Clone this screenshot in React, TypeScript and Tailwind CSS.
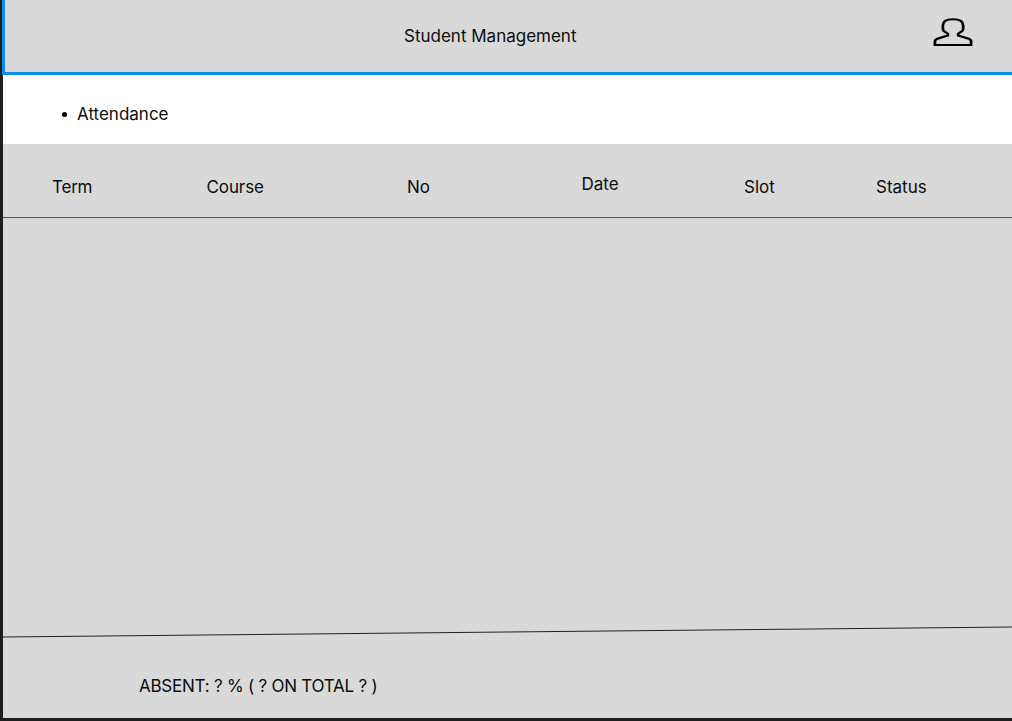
import React from "react";

const columns = [
  { label: "Term", cls: "w-[154.5px] -tracking-[0.2px]" },
  { label: "Course", cls: "w-[200.5px] -tracking-[0.1px]" },
  { label: "No", cls: "w-[174.5px]" },
  { label: "Date", cls: "w-[162.5px] -mt-[3px]" },
  { label: "Slot", cls: "w-[132px]" },
  { label: "Status", cls: "" },
];

export default function App() {
  return (
    <div className="flex h-[721px] w-[1012px] flex-col overflow-hidden bg-[#1e1e1e] pb-[3px] pl-[3px] font-['Inter',sans-serif] text-[17px] leading-5 text-[#0d0d0d]">
      <header className="-ml-[1px] flex h-[75px] shrink-0 border-b-[3px] border-l-[3px] border-[#0d8ce9] bg-[#d9d9d9] pl-[399px] pt-[26px]">
        <h1 className="w-[529px] whitespace-nowrap">Student Management</h1>
        <svg className="-mt-[9px] h-[30px] w-[40px] shrink-0" viewBox="0 0 30.77 30" preserveAspectRatio="none" fill="none" stroke="black" strokeWidth="2.1">
          <path d="M11.4 18.5 V16.8 L8.3 14 Q7.6 13.2 7.6 11.5 V8.5 C7.6 4.2 10.5 2.2 15.4 2.2 C20.3 2.2 23.2 4.2 23.2 8.5 V11.5 Q23.2 13.2 22.5 14 L19.4 16.8 V18.5 L27.5 21.7 Q29.3 22.5 29.3 24.3 V28 H1.5 V24.3 Q1.5 22.5 3.3 21.7 Z" />
        </svg>
      </header>
      <nav className="h-[69px] shrink-0 bg-white pl-[59px] pt-[29px]">
        <ul>
          <li className="flex items-center before:mt-px before:mr-[10px] before:size-[5px] before:rounded-full before:bg-black before:content-['']">Attendance</li>
        </ul>
      </nav>
      <main className="flex flex-1 flex-col bg-[#d9d9d9]">
        <div className="flex h-[74px] border-b border-[#555] pl-[49px] pt-[33px]">
          {columns.map((c) => <div key={c.label} className={c.cls}>{c.label}</div>)}
        </div>
        <div className="flex-1" />
        <svg className="h-[12px] w-full" viewBox="0 0 1009 12" fill="none"><path d="M0 11L1009 1" stroke="#222" /></svg>
        <footer className="h-[80px] pl-[136px] pt-[38px] -tracking-[0.24px]">ABSENT: ? % ( ? ON TOTAL ? )</footer>
      </main>
    </div>
  );
}
